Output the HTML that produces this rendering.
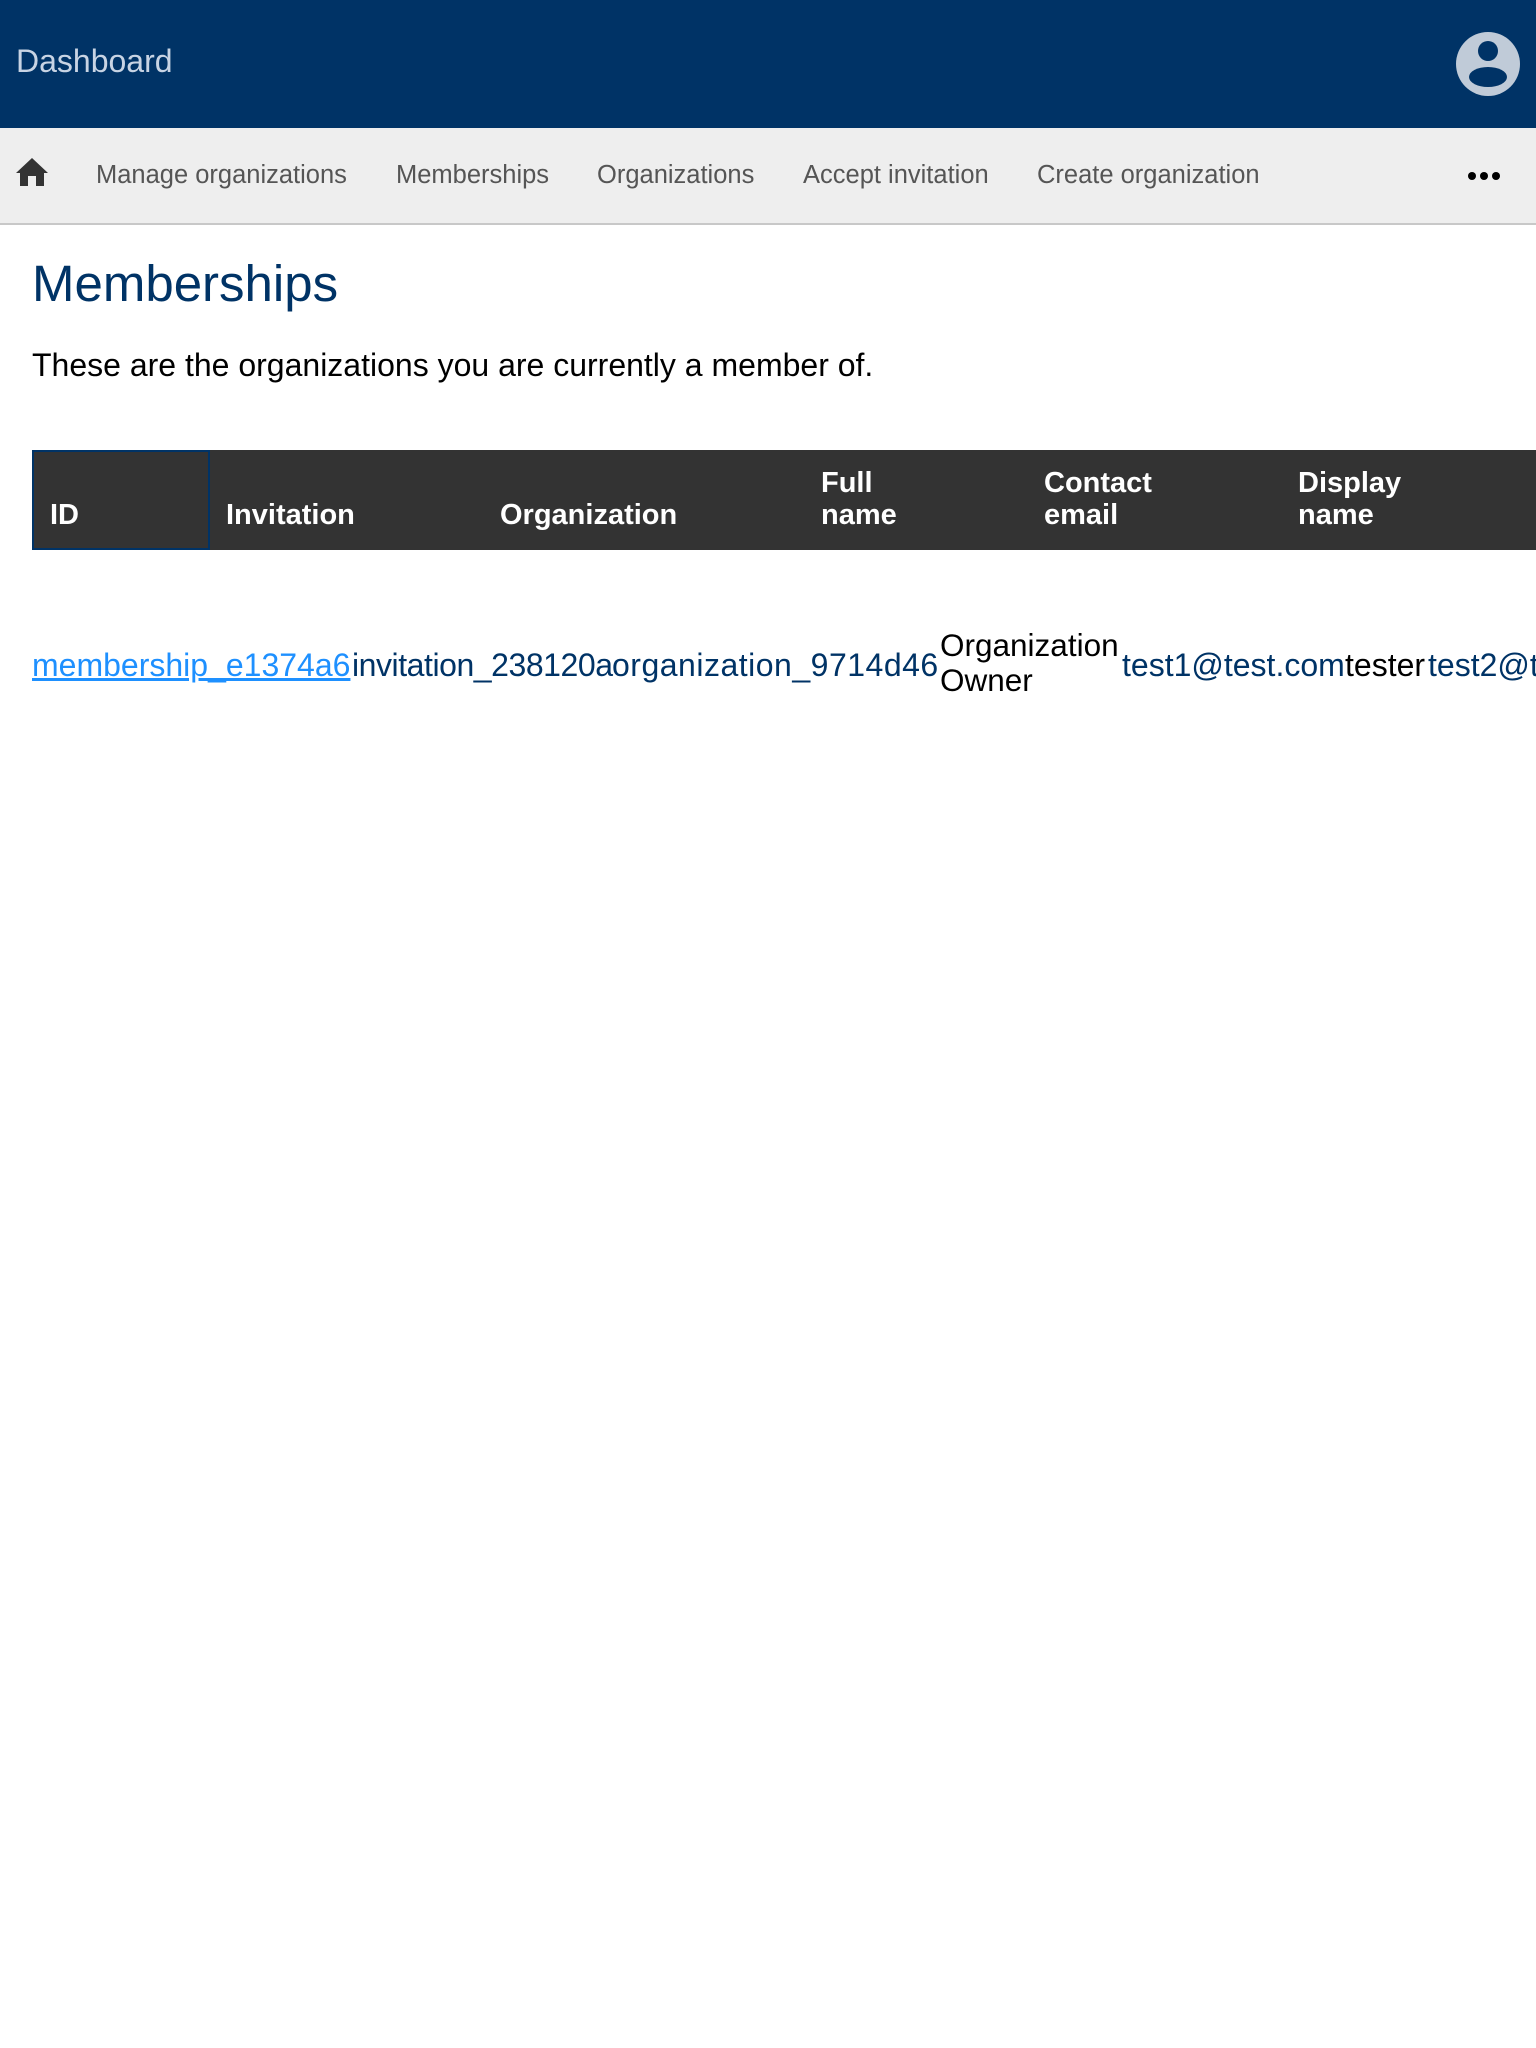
<!DOCTYPE html>
<html><head><meta charset="utf-8"><style>
*{margin:0;padding:0;box-sizing:border-box}
body{width:1536px;height:2048px;background:#fff;font-family:"Liberation Sans",sans-serif;position:relative;overflow:hidden}
.a{position:absolute;white-space:nowrap}
#hdr{position:absolute;left:0;top:0;width:1536px;height:128px;background:#003366}
#nav{position:absolute;left:0;top:128px;width:1536px;height:97px;background:#eee;border-bottom:2px solid #c8c8c8}
.n{position:absolute;top:160px;font-size:25.5px;line-height:30px;color:#555}
.th{position:absolute;color:#fff;font-weight:bold;font-size:29px;line-height:32px;white-space:nowrap}
.td{position:absolute;font-size:32px;line-height:36px;color:#003366;white-space:nowrap}
</style></head><body>
<div id="hdr"></div>
<div class="a" style="left:16px;top:42px;font-size:32px;line-height:38px;color:#c8d4e4">Dashboard</div>
<svg class="a" style="left:1456px;top:32px" width="64" height="64" viewBox="0 0 64 64"><circle cx="32" cy="32" r="32" fill="#c0cbd8"/><circle cx="32" cy="19" r="10" fill="#003366"/><ellipse cx="32" cy="45" rx="19" ry="10" fill="#003366"/></svg>
<div id="nav"></div>
<svg class="a" style="left:14px;top:155px" width="36" height="34" viewBox="0 0 36 34"><path d="M18 3 L2 18 H6 V31 H14 V21 H22 V31 H30 V18 H34 Z" fill="#333"/></svg>
<div class="n" style="left:96px">Manage organizations</div>
<div class="n" style="left:396px">Memberships</div>
<div class="n" style="left:597px">Organizations</div>
<div class="n" style="left:803px">Accept invitation</div>
<div class="n" style="left:1037px">Create organization</div>
<svg class="a" style="left:1464px;top:170px" width="40" height="12"><circle cx="8" cy="6" r="4"/><circle cx="20" cy="6" r="4"/><circle cx="32" cy="6" r="4"/></svg>
<div class="a" style="left:32px;top:254px;font-size:51px;line-height:60px;color:#003366">Memberships</div>
<div class="a" style="left:32px;top:345px;font-size:32px;line-height:40px;color:#000">These are the organizations you are currently a member of.</div>
<div class="a" style="left:32px;top:450px;width:1504px;height:100px;background:#333"></div>
<div class="a" style="left:32px;top:450px;width:178px;height:100px;border:2px solid #003366"></div>
<div class="th" style="left:50px;top:499px">ID</div>
<div class="th" style="left:226px;top:499px">Invitation</div>
<div class="th" style="left:500px;top:499px">Organization</div>
<div class="th" style="left:821px;top:467px">Full<br>name</div>
<div class="th" style="left:1044px;top:467px">Contact<br>email</div>
<div class="th" style="left:1298px;top:467px">Display<br>name</div>
<div class="td" style="left:32px;top:647px;color:#1e90ff;text-decoration:underline">membership_e1374a6</div>
<div class="td" style="left:352px;top:647px;letter-spacing:-0.45px">invitation_238120a</div>
<div class="td" style="left:612px;top:647px;letter-spacing:0.5px">organization_9714d46</div>
<div class="td" style="left:940px;top:628px;color:#000;font-size:31.5px;line-height:35px">Organization<br>Owner</div>
<div class="td" style="left:1122px;top:647px">test1@test.com</div>
<div class="td" style="left:1345px;top:647px;color:#000">tester</div>
<div class="td" style="left:1428px;top:647px">test2@test.com</div>
</body></html>
